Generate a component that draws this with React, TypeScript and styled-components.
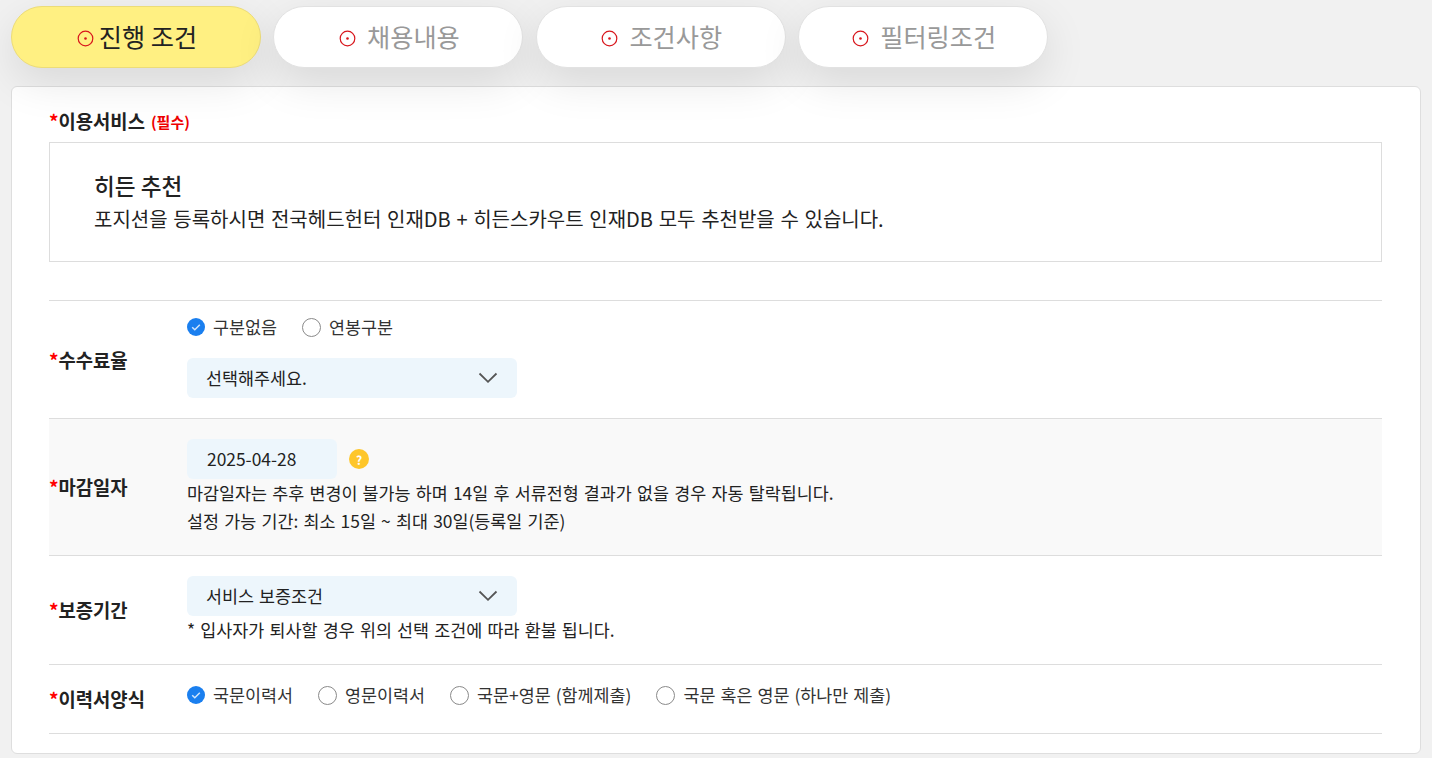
import React from "react";
import styled, { createGlobalStyle } from "styled-components";

const Global = createGlobalStyle`
  html, body { margin: 0; padding: 0; background: #f1f1f1; }
  body { font-family: "Noto Sans CJK KR", "Noto Sans", sans-serif; color: #222; height: 758px; overflow: hidden; }
  * { box-sizing: border-box; }
`;

const Page = styled.div`
  padding: 6px 11px 0;
`;

const Tabs = styled.div`
  display: flex;
  gap: 12.4px;
  position: relative;
  z-index: 2;
  height: 62px;
`;

const Tab = styled.div<{ $active?: boolean }>`
  width: 250px;
  height: 62px;
  border-radius: 31px;
  display: flex;
  align-items: center;
  justify-content: center;
  gap: ${(p) => (p.$active ? "5px" : "11px")};
  padding: 0 0 2px 2px;
  font-size: 25.2px;
  background: ${(p) => (p.$active ? "#fff082" : "#fff")};
  color: ${(p) => (p.$active ? "#222" : "#999")};
  border: 1px solid ${(p) => (p.$active ? "#ecdc78" : "#e2e2e2")};
  box-shadow: 0 14px 44px rgba(0, 0, 0, 0.1);
`;

const Card = styled.div`
  margin-top: 18px;
  height: 668px;
  background: #fff;
  border: 1px solid #dedede;
  border-radius: 6px;
  padding: 22px 38px 0 37px;
`;

const SectionLabel = styled.div`
  font-size: 18.8px;
  font-weight: 700;
  line-height: 24px;
  height: 24px;
  color: #222;
  white-space: nowrap;
`;

const Star = styled.span`
  color: #f00;
`;

const Required = styled.span`
  color: #e00;
  font-size: 15px;
  margin-left: 6px;
  position: relative;
  top: -1px;
`;

const ServiceBox = styled.div`
  margin-top: 9px;
  height: 120px;
  border: 1px solid #ddd;
  padding: 28px 44px 0;
`;

const ServiceTitle = styled.div`
  font-size: 22.6px;
  font-weight: 500;
  line-height: 30px;
  color: #222;
`;

const ServiceText = styled.div`
  font-size: 20px;
  word-spacing: 1.2px;
  line-height: 30px;
  margin-top: 3px;
  color: #222;
`;

const Rows = styled.div`
  margin-top: 38px;
  border-top: 1px solid #ddd;
`;

const Row = styled.div<{ $h: number; $gray?: boolean }>`
  display: flex;
  align-items: center;
  height: ${(p) => p.$h}px;
  border-bottom: 1px solid #ddd;
  background: ${(p) => (p.$gray ? "#f9f9f9" : "#fff")};
`;

const RowLabel = styled.div`
  width: 138px;
  flex: none;
  font-size: 18.8px;
  font-weight: 700;
  color: #222;
  line-height: 24px;
`;

const RowBody = styled.div<{ $up?: number }>`
  flex: 1;
  min-width: 0;
  display: flex;
  flex-direction: column;
  padding-bottom: ${(p) => p.$up ?? 0}px;
`;

const Radios = styled.div`
  display: flex;
  align-items: center;
  gap: 25px;
  height: 28px;
`;

const Radio = styled.label`
  display: flex;
  align-items: center;
  gap: 8px;
  font-size: 17.4px;
  word-spacing: 1.1px;
  color: #333;
  line-height: 24px;
`;

const RadioOff = styled.span`
  width: 19px;
  height: 19px;
  border-radius: 50%;
  border: 1px solid #8a8a8a;
  background: #fff;
  flex: none;
`;

const Select = styled.div<{ $mt?: number }>`
  width: 330px;
  height: 40px;
  margin-top: ${(p) => p.$mt ?? 0}px;
  background: #edf6fc;
  border-radius: 6px;
  padding: 0 19px 2px 19px;
  display: flex;
  align-items: center;
  justify-content: space-between;
  font-size: 17.4px;
  word-spacing: 1px;
  color: #222;
`;

const DateLine = styled.div`
  display: flex;
  align-items: center;
  gap: 12px;
`;

const DateInput = styled.div`
  width: 150px;
  height: 40px;
  background: #edf6fc;
  border-radius: 6px;
  padding: 0 0 2px 20px;
  display: flex;
  align-items: center;
  font-size: 17.4px;
  color: #222;
`;

const Help = styled.span`
  width: 20px;
  height: 20px;
  border-radius: 50%;
  background: #fec62a;
  color: #fff;
  font-size: 12px;
  font-weight: 700;
  display: flex;
  align-items: center;
  justify-content: center;
`;

const Note = styled.div`
  font-size: 17.4px;
  word-spacing: 1.3px;
  line-height: 28px;
  color: #222;
  white-space: nowrap;
`;

const TabIcon = () => (
  <svg width="17" height="17" viewBox="0 0 17 17" fill="none" style={{ flex: "none", marginTop: 5 }}>
    <circle cx="8.5" cy="8.5" r="7.3" stroke="#d8161c" strokeWidth="1.2" />
    <circle cx="8.5" cy="8.5" r="1.3" fill="#d8161c" />
  </svg>
);

const RadioOn = () => (
  <svg width="18" height="18" viewBox="0 0 18 18" style={{ flex: "none" }}>
    <circle cx="9" cy="9" r="9" fill="#1a7fef" />
    <path d="M5.2 9.2l2.6 2.6 5-5" fill="none" stroke="#fff" strokeWidth="1.5" opacity="0.8" />
  </svg>
);

const Chevron = () => (
  <svg width="20" height="12" viewBox="0 0 20 12" fill="none" style={{ marginTop: 2 }}>
    <path d="M1.5 1.5L10 9.8l8.5-8.3" stroke="#555" strokeWidth="1.8" />
  </svg>
);

export default function App() {
  return (
    <>
      <Global />
      <Page>
        <Tabs>
          <Tab $active><TabIcon />진행 조건</Tab>
          <Tab><TabIcon />채용내용</Tab>
          <Tab><TabIcon />조건사항</Tab>
          <Tab><TabIcon />필터링조건</Tab>
        </Tabs>
        <Card>
          <SectionLabel><Star>*</Star>이용서비스<Required>(필수)</Required></SectionLabel>
          <ServiceBox>
            <ServiceTitle>히든 추천</ServiceTitle>
            <ServiceText>포지션을 등록하시면 전국헤드헌터 인재DB + 히든스카우트 인재DB 모두 추천받을 수 있습니다.</ServiceText>
          </ServiceBox>
          <Rows>
            <Row $h={118}>
              <RowLabel><Star>*</Star>수수료율</RowLabel>
              <RowBody $up={8}>
                <Radios>
                  <Radio><RadioOn />구분없음</Radio>
                  <Radio><RadioOff />연봉구분</Radio>
                </Radios>
                <Select $mt={17}>선택해주세요.<Chevron /></Select>
              </RowBody>
            </Row>
            <Row $h={137} $gray>
              <RowLabel><Star>*</Star>마감일자</RowLabel>
              <RowBody>
                <DateLine><DateInput>2025-04-28</DateInput><Help>?</Help></DateLine>
                <Note>마감일자는 추후 변경이 불가능 하며 14일 후 서류전형 결과가 없을 경우 자동 탈락됩니다.</Note>
                <Note>설정 가능 기간: 최소 15일 ~ 최대 30일(등록일 기준)</Note>
              </RowBody>
            </Row>
            <Row $h={109}>
              <RowLabel><Star>*</Star>보증기간</RowLabel>
              <RowBody>
                <Select>서비스 보증조건<Chevron /></Select>
                <Note>* 입사자가 퇴사할 경우 위의 선택 조건에 따라 환불 됩니다.</Note>
              </RowBody>
            </Row>
            <Row $h={69}>
              <RowLabel><Star>*</Star>이력서양식</RowLabel>
              <RowBody $up={8}>
                <Radios>
                  <Radio><RadioOn />국문이력서</Radio>
                  <Radio><RadioOff />영문이력서</Radio>
                  <Radio><RadioOff />국문+영문 (함께제출)</Radio>
                  <Radio><RadioOff />국문 혹은 영문 (하나만 제출)</Radio>
                </Radios>
              </RowBody>
            </Row>
          </Rows>
        </Card>
      </Page>
    </>
  );
}
